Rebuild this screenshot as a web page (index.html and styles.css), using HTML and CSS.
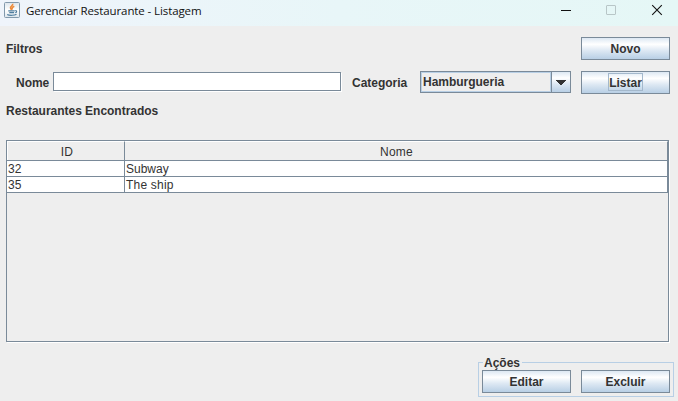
FILE: index.html
```html
<!DOCTYPE html>
<html lang="pt-BR">
<head>
<meta charset="utf-8">
<title>Gerenciar Restaurante - Listagem</title>
<link rel="stylesheet" href="styles.css">
</head>
<body>
<header class="titlebar">
  <svg class="app-icon" width="16" height="16" viewBox="0 0 16 16">
    <defs><linearGradient id="tile" x1="0" y1="0" x2="0" y2="1"><stop offset="0" stop-color="#dce4eb"/><stop offset=".5" stop-color="#fff"/><stop offset="1" stop-color="#dce5ec"/></linearGradient></defs>
    <rect x=".5" y=".5" width="15" height="15" rx="1" fill="url(#tile)" stroke="#8299ac"/>
    <path d="M8.700 1.800c.8 2-3.200 2.500-2.200 4.300L7.600 8M10.300 4.300C7.800 5.500 7.600 6 8.600 7.500" fill="none" stroke="#ed8b3b" stroke-width="1.500"/>
    <path d="M4.300 8.800h6.400M5.300 10.600h4.800M3.200 12.500c2 1.200 7.500 1 9.300-.2M11 8.800c2.300-.5 2 1.500.2 2" fill="none" stroke="#4f7d9f" stroke-width="1.150"/>
  </svg>
  <h1 class="title">Gerenciar Restaurante - Listagem</h1>
  <svg class="controls" width="116" height="26" viewBox="0 0 116 26" fill="none">
    <path d="M6 10.500h10" stroke="#111"/>
    <rect x="51.500" y="5.500" width="9" height="9" rx=".5" stroke="#b8c6c7"/>
    <path d="M97.200 5.200l9.600 9.600M106.800 5.200l-9.600 9.600" stroke="#111" stroke-width="1.100"/>
  </svg>
</header>
<main class="content">
  <div class="filters-head">
    <span class="label filtros">Filtros</span>
    <button class="btn">Novo</button>
  </div>
  <div class="filters">
    <label class="label nome" for="nome">Nome</label>
    <input class="field" id="nome" type="text">
    <span class="label categoria">Categoria</span>
    <div class="combo">
      <span class="combo-value">Hamburgueria</span>
      <span class="combo-arrow"><svg width="10" height="5" viewBox="0 0 10 5" shape-rendering="crispEdges"><path d="M0 0h10v1H9v1H8v1H7v1H6v1H4V4H3V3H2V2H1V1H0z" fill="#333"/></svg></span>
    </div>
    <button class="btn focused"><span class="focus">Listar</span></button>
  </div>
  <h2 class="label found">Restaurantes Encontrados</h2>
  <div class="scroll">
    <div class="row head"><div class="id">ID</div><div class="name">Nome</div></div>
    <div class="row"><div class="id">32</div><div class="name subway">Subway</div></div>
    <div class="row"><div class="id">35</div><div class="name">The ship</div></div>
  </div>
  <section class="actions">
    <h2 class="legend">Ações</h2>
    <button class="btn">Editar</button>
    <button class="btn">Excluir</button>
  </section>
</main>
</body>
</html>
```
FILE: styles.css
```css
* { box-sizing: border-box; }
body {
  margin: 0;
  width: 678px;
  height: 401px;
  overflow: hidden;
  background: #eee;
  color: #333;
  font: 12px/15px "Liberation Sans", Arial, sans-serif;
}
h1, h2 { margin: 0; font-size: 12px; }
.titlebar {
  display: flex;
  height: 26px;
  padding-left: 4px;
  background: linear-gradient(90deg, #eff4fb, #e8f6f8 50%, #e5f7f6);
}
.app-icon { margin-top: 2px; }
.title {
  margin-left: 6px;
  color: #111;
  font: 11.5px/22px "Open Sans", "Noto Sans", sans-serif;
  letter-spacing: -0.1px;
  white-space: nowrap;
}
.controls { margin-left: auto; margin-right: 7px; }
.content { padding: 11px 4px 0 6px; }
.label { font-weight: bold; letter-spacing: -0.02px; white-space: nowrap; }
.filters-head { display: flex; justify-content: space-between; padding-right: 4px; }
.filtros { margin-top: 5px; }
.btn {
  display: flex;
  align-items: center;
  justify-content: center;
  width: 89px;
  height: 23px;
  padding: 2px 0 0;
  border: 1px solid #7a8a99;
  border-radius: 0;
  background: linear-gradient(#dde8f3 0, #fff 30%, #dde8f3 60%, #b8cfe5 100%);
  color: #333;
  font: bold 12px/15px "Liberation Sans", Arial, sans-serif;
}
.filters { display: flex; margin-top: 11px; padding-left: 10px; }
.filters .label { margin-top: 5px; }
.nome { width: 37px; }
.field {
  width: 288px;
  height: 19px;
  margin: 1px 0 0;
  padding: 0 2px;
  border: 1px solid #7a8a99;
  border-radius: 0;
  background: #fff;
  box-shadow: 1px 1px 0 #fff;
  font: inherit;
}
.categoria { width: 68px; margin-left: 11px; }
.combo {
  display: flex;
  width: 151px;
  height: 22px;
  margin-right: 10px;
  border: 1px solid #7a8a99;
}
.combo-value {
  flex: 1;
  padding: 2px 0 0 1px;
  border: 1px solid #b8cfe5;
  font-weight: bold;
  letter-spacing: -0.02px;
}
.combo-arrow {
  display: flex;
  align-items: center;
  justify-content: center;
  width: 19px;
  border-left: 1px solid #7a8a99;
  background: linear-gradient(#dde8f3 0, #fff 30%, #dde8f3 60%, #b8cfe5 100%);
}
.btn.focused { align-items: flex-start; padding-top: 1px; }
.focus {
  width: 35px;
  height: 18px;
  border: 1px solid #a3b8cc;
  line-height: 19px;
  white-space: nowrap;
}
.found { height: 15px; margin-top: 10px; }
.scroll {
  width: 663px;
  height: 202px;
  margin-top: 21px;
  border: 1px solid #7a8a99;
  box-shadow: 1px 1px 0 #fff;
}
.row {
  display: grid;
  grid-template: 100% / 118px 543px;
  height: 16px;
  background: #fff;
  letter-spacing: 0.2px;
}
.row > div {
  padding-left: 1px;
  border-right: 1px solid #7a8a99;
  border-bottom: 1px solid #7a8a99;
  line-height: 16px;
}
.row > .subway { letter-spacing: 0; }
.row.head { height: 20px; background: #eee; text-align: center; }
.row.head > div { border-top: 1px solid #fff; line-height: 20px; }
.row.head > .id { padding-left: 3px; box-shadow: inset 1px 0 0 #fff; }
.actions {
  position: relative;
  display: flex;
  gap: 10px;
  width: 196px;
  height: 35px;
  margin: 20px 0 0 auto;
  padding: 7px 3px 0;
  border: 1px solid #b8cfe5;
}
.legend {
  position: absolute;
  left: 4px;
  top: -7px;
  width: 39px;
  height: 14px;
  padding-left: 1px;
  background: #eee;
  line-height: 15px;
  white-space: nowrap;
}
```
